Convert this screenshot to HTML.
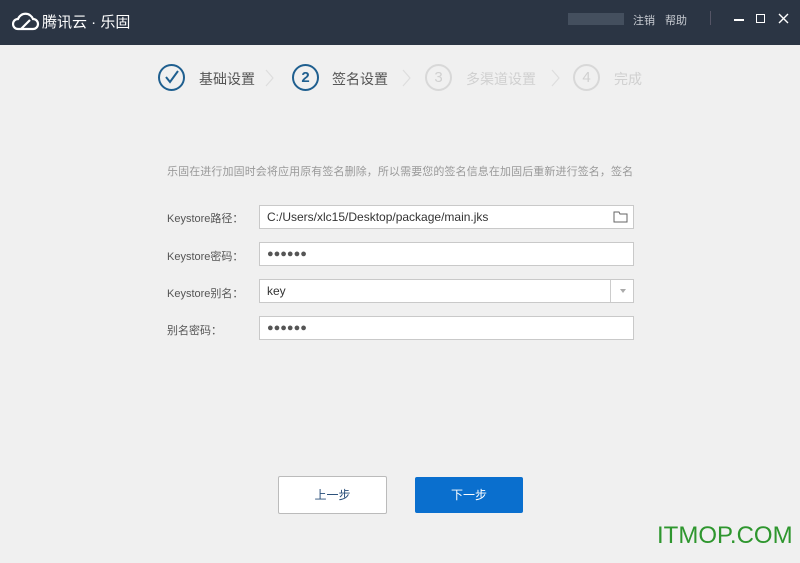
<!DOCTYPE html>
<html><head><meta charset="utf-8"><style>
*{margin:0;padding:0;box-sizing:border-box}
body{width:800px;height:563px;background:#f0f0f0;font-family:"Liberation Sans","Noto Sans CJK SC",sans-serif;position:relative;overflow:hidden}
.hd{position:absolute;left:0;top:0;width:800px;height:45px;background:#2b3544}
.a{position:absolute}
.c{position:absolute;width:27px;height:27px;border-radius:50%;border:2px solid #1f5f8f;text-align:center;font-size:15px;line-height:23px;font-weight:bold;color:#1f5f8f}
.g{border-color:#d8d8d8;color:#d0d0d0;font-weight:normal}
.st{position:absolute;top:69px;font-size:14px;color:#555}
.lb{position:absolute;left:167px;font-size:11px;color:#555}
.in{position:absolute;left:259px;width:375px;height:24px;background:#fff;border:1px solid #c9c9c9;font-size:12px;color:#333;padding-left:7px;line-height:22px}
.dots{font-size:11px;letter-spacing:0px;color:#555}
</style></head><body>
<div class="hd"></div>
<svg class="a" style="left:12px;top:11px" width="28" height="20" viewBox="0 0 28 20"><path d="M6 18 H21 A5 5 0 0 0 21 8 A8 8 0 0 0 6 8 A5 5 0 0 0 6 18 Z M9 18 L18 9" fill="none" stroke="#fff" stroke-width="2.2"/></svg>
<div class="a" style="left:42px;top:11px;color:#fff;font-size:15px">腾讯云 · 乐固</div>
<div class="a" style="left:568px;top:13px;width:56px;height:12px;background:#556070;opacity:.6"></div>
<div class="a" style="left:633px;top:12px;color:#c8ccd2;font-size:11px">注销</div>
<div class="a" style="left:665px;top:12px;color:#c8ccd2;font-size:11px">帮助</div>
<div class="a" style="left:710px;top:11px;width:1px;height:14px;background:#556"></div>
<div class="a" style="left:734px;top:19px;width:10px;height:1.5px;background:#fff"></div>
<div class="a" style="left:756px;top:14px;width:9px;height:9px;border:1.5px solid #fff"></div>
<svg class="a" style="left:778px;top:13px" width="11" height="11"><path d="M1 1L10 10M10 1L1 10" stroke="#fff" stroke-width="1.4"/></svg>

<div class="c" style="left:158px;top:64px"><svg width="23" height="23"><path d="M6 11L10 16L18 5" fill="none" stroke="#1f5f8f" stroke-width="2"/></svg></div>
<div class="st" style="left:199px">基础设置</div>
<svg class="a" style="left:265px;top:69px" width="10" height="18"><path d="M1 1L8 9L1 17" fill="none" stroke="#ddd" stroke-width="1.2"/></svg>
<div class="c" style="left:292px;top:64px">2</div>
<div class="st" style="left:332px">签名设置</div>
<svg class="a" style="left:402px;top:69px" width="10" height="18"><path d="M1 1L8 9L1 17" fill="none" stroke="#ddd" stroke-width="1.2"/></svg>
<div class="c g" style="left:425px;top:64px">3</div>
<div class="st" style="left:466px;color:#d0d0d0">多渠道设置</div>
<svg class="a" style="left:551px;top:69px" width="10" height="18"><path d="M1 1L8 9L1 17" fill="none" stroke="#ddd" stroke-width="1.2"/></svg>
<div class="c g" style="left:573px;top:64px">4</div>
<div class="st" style="left:614px;color:#d0d0d0">完成</div>

<div class="a" style="left:167px;top:163px;width:467px;overflow:hidden;white-space:nowrap;font-size:11px;letter-spacing:0.1px;color:#999">乐固在进行加固时会将应用原有签名删除，所以需要您的签名信息在加固后重新进行签名，签名只</div>

<div class="lb" style="top:210px">Keystore路径：</div>
<div class="in" style="top:205px">C:/Users/xlc15/Desktop/package/main.jks
<svg class="a" style="right:5px;top:5px" width="15" height="12"><path d="M1 1H6L7 3H14V11H1Z" fill="none" stroke="#666"/></svg></div>
<div class="lb" style="top:248px">Keystore密码：</div>
<div class="in dots" style="top:242px">●●●●●●</div>
<div class="lb" style="top:285px">Keystore别名：</div>
<div class="in" style="top:279px">key<div class="a" style="right:22px;top:0;width:1px;height:22px;background:#ccc"></div><div class="a" style="right:7px;top:9px;border:3.5px solid transparent;border-top:4px solid #aaa"></div></div>
<div class="lb" style="top:322px">别名密码：</div>
<div class="in dots" style="top:316px">●●●●●●</div>

<div class="a" style="left:278px;top:476px;width:109px;height:38px;background:#fff;border:1px solid #bbb;border-radius:2px;text-align:center;line-height:36px;font-size:12px;color:#2a4f7a">上一步</div>
<div class="a" style="left:415px;top:477px;width:108px;height:36px;background:#0a6fce;border-radius:2px;text-align:center;line-height:36px;font-size:12px;color:#fff">下一步</div>
<div class="a" style="left:657px;top:522px;font-size:24px;color:#2e962e">ITMOP.COM</div>
</body></html>
